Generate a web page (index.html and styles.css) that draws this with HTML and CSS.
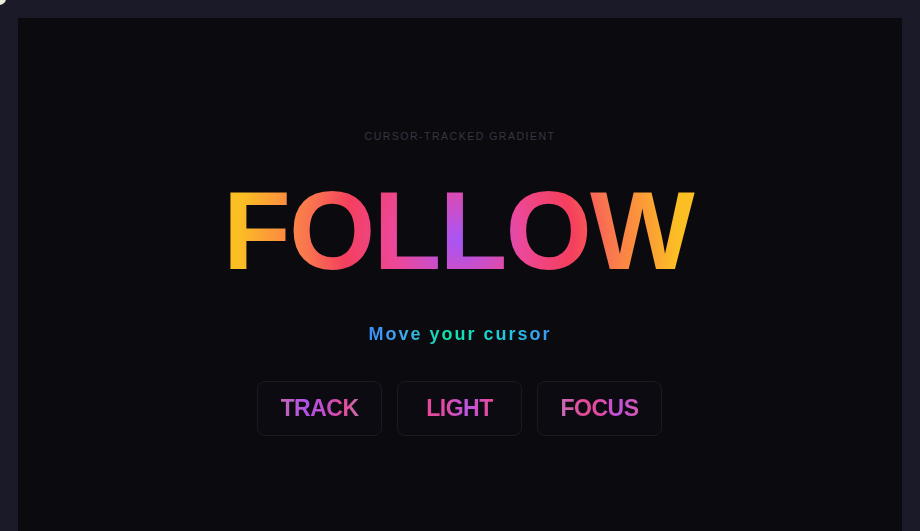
FILE: index.html
```html
<!DOCTYPE html>
<html lang="en">
<head>
<meta charset="utf-8">
<title>Follow</title>
<link rel="stylesheet" href="styles.css">
</head>
<body>
<div class="cursor-dot"></div>
<main class="stage">
  <p class="eyebrow">CURSOR-TRACKED GRADIENT</p>
  <h1 class="title"><span class="title-text">FOLLOW</span></h1>
  <p class="hint"><span class="hint-text">Move your cursor</span></p>
  <div class="chips">
    <div class="chip"><span class="chip-text chip-track">TRACK</span></div>
    <div class="chip"><span class="chip-text chip-light">LIGHT</span></div>
    <div class="chip"><span class="chip-text chip-focus">FOCUS</span></div>
  </div>
</main>
</body>
</html>
```

FILE: styles.css
```css
html, body {
  margin: 0;
  padding: 0;
  height: 100%;
  overflow: hidden;
}
body {
  background: #1a1a28;
  padding: 18px 18px 0 18px;
  box-sizing: border-box;
  font-family: "Liberation Sans", Arial, sans-serif;
  position: relative;
}
.cursor-dot {
  position: absolute;
  left: -7px;
  top: -8px;
  width: 13px;
  height: 13px;
  border-radius: 50%;
  background: #ecebdc;
}
.stage {
  background: #0a0a0f;
  height: 560px;
  padding-top: 111px;
  box-sizing: border-box;
  display: flex;
  flex-direction: column;
  align-items: center;
}
.eyebrow {
  margin: 0;
  font-size: 10.5px;
  line-height: 14px;
  letter-spacing: 1.5px;
  color: #37373f;
  padding-left: 0;
}
.title {
  margin: 32px 0 0 0;
  font-size: 111px;
  line-height: 112px;
  font-weight: 700;
  letter-spacing: -1.8px;
  padding-left: 0;
}
.title-text {
  display: inline-block;
  padding-right: 4px;
  background: radial-gradient(circle at 235px 58%, #a855f7 0px, #ec4899 65px, #f43f5e 115px, #f97350 150px, #fb923c 180px, #fbbf24 220px);
  -webkit-background-clip: text;
  background-clip: text;
  color: transparent;
}
.hint {
  margin: 35px 0 0 0;
  font-size: 18px;
  line-height: 24px;
  font-weight: 700;
  letter-spacing: 2px;
}
.hint-text {
  display: inline-block;
  background: linear-gradient(90deg, #3b8df6 0%, #3fa6f2 18%, #10e4a8 42%, #14dcc4 60%, #22c4e4 76%, #3b98f6 100%);
  -webkit-background-clip: text;
  background-clip: text;
  color: transparent;
}
.chips {
  margin-top: 35px;
  display: flex;
  gap: 15px;
  padding-right: 1px;
}
.chip {
  width: 125px;
  height: 55px;
  box-sizing: border-box;
  border: 1px solid #1b1b24;
  border-radius: 8px;
  background: #0b0b11;
  display: flex;
  align-items: center;
  justify-content: center;
}
.chip-text {
  font-size: 23px;
  font-weight: 700;
  letter-spacing: -0.5px;
  line-height: 28px;
  margin-top: -1px;
  -webkit-background-clip: text;
  background-clip: text;
  color: transparent;
}
.chip-track {
  background-image: linear-gradient(90deg, #c466b4 0%, #b152e6 30%, #c04fd0 55%, #e5489a 80%, #c070b0 100%);
}
.chip-light {
  background-image: linear-gradient(90deg, #e8489a 0%, #e04aa8 30%, #bb56e0 62%, #ec4894 100%);
}
.chip-focus {
  background-image: linear-gradient(90deg, #c46cb4 0%, #e84898 30%, #e24aa4 50%, #bf52e0 72%, #d858b0 100%);
}
```
